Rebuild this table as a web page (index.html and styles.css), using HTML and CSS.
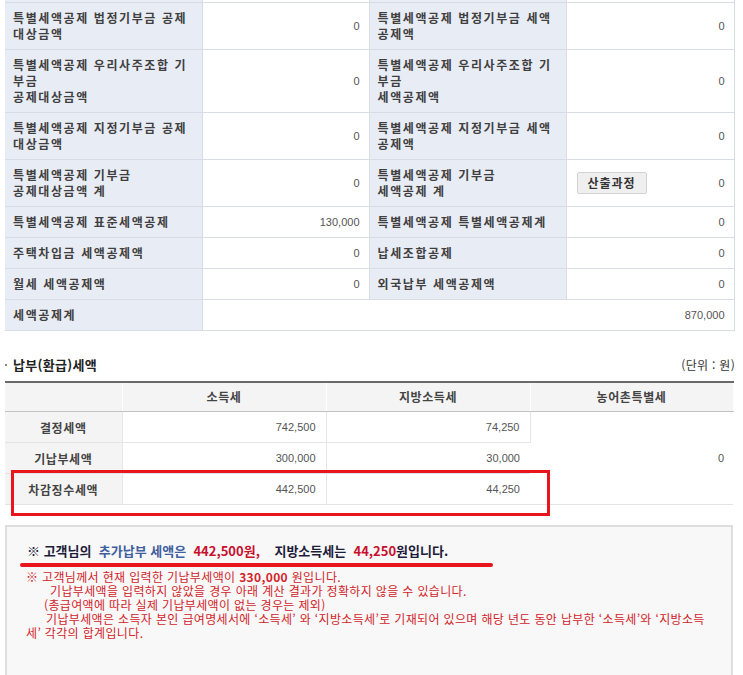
FILE: index.html
```html
<!DOCTYPE html>
<html lang="ko">
<head>
<meta charset="utf-8">
<title>납부(환급)세액</title>
<link rel="stylesheet" href="styles.css">
</head>
<body>
<div class="page">
  <table class="deduct">
    <colgroup><col class="c-l1"><col class="c-v1"><col class="c-l2"><col class="c-v2"></colgroup>
    <tr class="stub"><th></th><td></td><th></th><td></td></tr>
    <tr>
      <th>특별세액공제 법정기부금 공제<br>대상금액</th><td>0</td>
      <th>특별세액공제 법정기부금 세액<br>공제액</th><td>0</td>
    </tr>
    <tr>
      <th>특별세액공제 우리사주조합 기<br>부금<br>공제대상금액</th><td>0</td>
      <th>특별세액공제 우리사주조합 기<br>부금<br>세액공제액</th><td>0</td>
    </tr>
    <tr>
      <th>특별세액공제 지정기부금 공제<br>대상금액</th><td>0</td>
      <th>특별세액공제 지정기부금 세액<br>공제액</th><td>0</td>
    </tr>
    <tr>
      <th>특별세액공제 기부금<br>공제대상금액 계</th><td>0</td>
      <th>특별세액공제 기부금<br>세액공제 계</th>
      <td class="calc"><div class="calc-row"><button class="calc-btn" type="button">산출과정</button><span>0</span></div></td>
    </tr>
    <tr>
      <th>특별세액공제 표준세액공제</th><td>130,000</td>
      <th>특별세액공제 특별세액공제계</th><td>0</td>
    </tr>
    <tr>
      <th>주택차입금 세액공제액</th><td>0</td>
      <th>납세조합공제</th><td>0</td>
    </tr>
    <tr>
      <th>월세 세액공제액</th><td>0</td>
      <th>외국납부 세액공제액</th><td>0</td>
    </tr>
    <tr class="total">
      <th>세액공제계</th><td colspan="3">870,000</td>
    </tr>
  </table>

  <div class="sec-head">
    <h3 class="sec-title">납부(환급)세액</h3>
    <span class="unit">(단위 : 원)</span>
  </div>

  <div class="pay-wrap">
    <table class="pay">
      <colgroup><col class="p1"><col class="p2"><col class="p3"><col class="p4"></colgroup>
      <tr class="head"><th></th><th>소득세</th><th>지방소득세</th><th>농어촌특별세</th></tr>
      <tr><th>결정세액</th><td>742,500</td><td>74,250</td><td rowspan="3">0</td></tr>
      <tr><th>기납부세액</th><td>300,000</td><td>30,000</td></tr>
      <tr><th>차감징수세액</th><td>442,500</td><td>44,250</td></tr>
    </table>
    <div class="red-box"></div>
  </div>

  <div class="notice">
    <p class="notice-main"><span class="dk">※ 고객님의</span>&nbsp; <span class="bl">추가납부 세액은</span>&nbsp; <span class="rd">442,500원,</span>&nbsp;&nbsp;&nbsp; <span class="dk">지방소득세는</span>&nbsp; <span class="rd">44,250</span><span class="dk">원입니다.</span></p>
    <div class="mark-line"></div>
    <div class="notes">
      <p>※ 고객님께서 현재 입력한 기납부세액이 <b>330,000</b> 원입니다.</p>
      <p class="ind1">기납부세액을 입력하지 않았을 경우 아래 계산 결과가 정확하지 않을 수 있습니다.</p>
      <p class="ind2">(총급여액에 따라 실제 기납부세액이 없는 경우는 제외)</p>
      <p class="ind3">기납부세액은 소득자 본인 급여명세서에 ‘소득세’ 와 ‘지방소득세’로 기재되어 있으며 해당 년도 동안 납부한 ‘소득세’와 ‘지방소득</p>
      <p>세’ 각각의 합계입니다.</p>
    </div>
  </div>
</div>
</body>
</html>
```

FILE: styles.css
```css
* { box-sizing: border-box; }
html, body { margin: 0; padding: 0; background: #fff; }
body {
  font-family: "Noto Sans CJK KR", "Noto Sans", sans-serif;
  font-size: 12px;
  color: #333;
  overflow: hidden;
}
.page { padding-left: 5px; width: 743px; }

/* deduction table */
.deduct { border-collapse: collapse; table-layout: fixed; width: 729px; }
.c-l1 { width: 197px; } .c-v1 { width: 167px; } .c-l2 { width: 197px; } .c-v2 { width: 168px; }
.deduct th, .deduct td {
  padding: 7px 9px 7px 8px;
  line-height: 16px;
  border-bottom: 1px solid #d7dce5;
  border-right: 1px solid #d7dce5;
  vertical-align: middle;
}
.deduct th {
  background: #e8ecf5;
  text-align: left;
  font-weight: 700;
  font-size: 12px;
  color: #404040;
  white-space: nowrap;
  letter-spacing: 1.6px;
}
.deduct td {
  background: #fff;
  text-align: right;
  font-family: "Liberation Sans", Arial, sans-serif;
  font-size: 11px;
  color: #555;
}
.deduct .stub th, .deduct .stub td { padding: 0; height: 2px; line-height: 2px; }
.deduct .total td { padding-right: 9px; }
.deduct .calc { padding-left: 10px; }
.calc-row { display: flex; align-items: center; justify-content: space-between; }
.calc-btn {
  width: 70px; height: 22px;
  padding: 0;
  background: #efefef;
  border: 1px solid #d3d3d3;
  border-radius: 2px;
  font-family: "Noto Sans CJK KR", sans-serif;
  font-size: 12px;
  font-weight: 700;
  color: #333;
  letter-spacing: 1px;
}

/* section head */
.sec-head {
  display: flex; justify-content: space-between; align-items: center;
  width: 730px; height: 22px;
  margin-top: 23px; margin-bottom: 5px;
}
.sec-title {
  margin: 0;
  font-size: 13px; font-weight: 700; color: #222;
  padding-left: 8px; position: relative; line-height: 22px;
  letter-spacing: 0.3px;
}
.sec-title::before {
  content: ""; position: absolute; left: 0; top: 10px;
  width: 2px; height: 2px; background: #888;
}
.unit { font-size: 12px; color: #333; line-height: 22px; letter-spacing: 0.3px; }

/* payment table */
.pay-wrap { position: relative; width: 728px; }
.pay {
  border-collapse: collapse; table-layout: fixed; width: 728px;
  border-top: 2px solid #6a6a6a;
}
.p1 { width: 117px; } .p2 { width: 204px; } .p3 { width: 204px; } .p4 { width: 203px; }
.pay th, .pay td {
  height: 31px; padding: 0 9px 0 9px;
  border-bottom: 1px solid #e4e4e4;
  border-right: 1px solid #e6e6e6;
  vertical-align: middle;
}
.pay th:last-child, .pay td:last-child { border-right: 0; }
.pay tr.head th {
  background: #f4f4f4;
  border-bottom: 1px solid #c2c2c2;
  border-right: 1px solid #fff;
  height: 30px;
}
.pay th {
  background: #f4f4f4;
  font-size: 12px; font-weight: 700; color: #444;
  text-align: center; letter-spacing: 0.6px;
}
.pay td {
  background: #fff;
  text-align: right;
  font-family: "Liberation Sans", Arial, sans-serif;
  font-size: 11px; color: #555;
  padding-right: 10px;
}
.pay td[rowspan] { padding-right: 9px; }
.red-box {
  position: absolute; left: 6px; top: 89px;
  width: 539px; height: 46px;
  border: 3px solid #e8151d;
}

/* notice */
.notice {
  margin-top: 20px;
  width: 728px; height: 180px;
  border: 2px solid #dedede;
  background: #f8f8f8;
  padding: 16px 20px 0 20px;
}
.notice-main {
  margin: 0;
  font-size: 13px; font-weight: 700; line-height: 16px;
  white-space: nowrap;
}
.dk { color: #1d1d3a; }
.bl { color: #3f5f9e; }
.rd { color: #c8102e; }
.mark-line {
  margin: 4px 0 0 -7px;
  width: 473px; height: 4px;
  border-radius: 2px;
  background: #e8151d;
}
.notes {
  margin-top: 3px; margin-left: -1px;
  color: #d2242a; font-size: 12px; line-height: 14px;
  letter-spacing: 0.35px;
}
.notes p { margin: 0; white-space: nowrap; }
.notes b { font-weight: 700; }
.ind1 { padding-left: 24px; }
.ind2 { padding-left: 18px; }
.ind3 { padding-left: 20px; }
```
